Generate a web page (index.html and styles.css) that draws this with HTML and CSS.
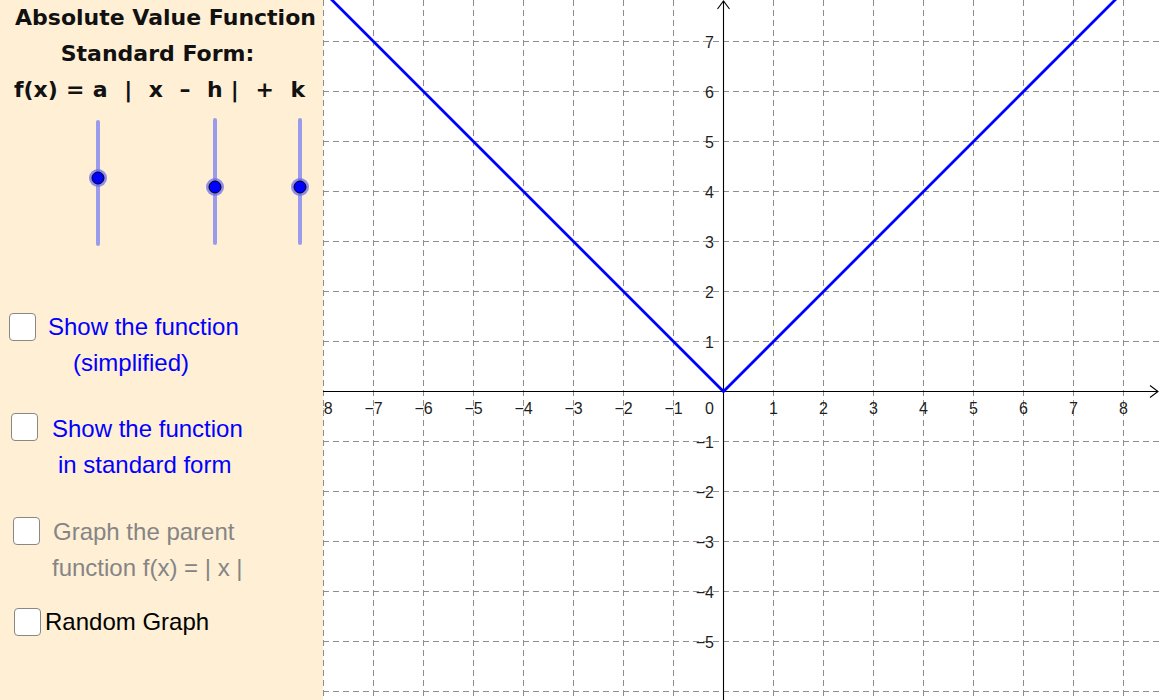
FILE: index.html
```html
<!DOCTYPE html>
<html>
<head>
<meta charset="utf-8">
<link rel="stylesheet" href="styles.css">
</head>
<body>
<div class="app">
  <div class="panel">
    <div class="title">
      <div class="t1">Absolute Value Function</div>
      <div class="t2">Standard Form:</div>
      <div class="t3">f(x) = a  |  x  –  h |  +  k</div>
    </div>
    <svg class="sliders" width="323" height="140" viewBox="0 110 323 140">
      <g stroke="#9b9bee" stroke-width="4" stroke-linecap="round">
        <line x1="98" y1="122" x2="98" y2="244"/>
        <line x1="215" y1="120" x2="215" y2="243"/>
        <line x1="300" y1="120" x2="300" y2="243"/>
      </g>
      <g>
        <circle cx="98" cy="178" r="9" fill="#6c6cf0" opacity="0.75"/>
        <circle cx="98" cy="178" r="6" fill="#0000ff" stroke="#000" stroke-width="1"/>
        <circle cx="215" cy="187" r="9" fill="#6c6cf0" opacity="0.75"/>
        <circle cx="215" cy="187" r="6" fill="#0000ff" stroke="#000" stroke-width="1"/>
        <circle cx="300" cy="187" r="9" fill="#6c6cf0" opacity="0.75"/>
        <circle cx="300" cy="187" r="6" fill="#0000ff" stroke="#000" stroke-width="1"/>
      </g>
    </svg>
    <div class="check c1">
      <span class="box"></span>
      <div class="label blue">
        <div>Show the function</div>
        <div class="l2">(simplified)</div>
      </div>
    </div>
    <div class="check c2">
      <span class="box"></span>
      <div class="label blue">
        <div>Show the function</div>
        <div class="l2">in standard form</div>
      </div>
    </div>
    <div class="check c3">
      <span class="box"></span>
      <div class="label gray">
        <div>Graph the parent</div>
        <div class="l2">function f(x) = | x |</div>
      </div>
    </div>
    <div class="check c4">
      <span class="box"></span>
      <div class="label black">
        <div>Random Graph</div>
      </div>
    </div>
  </div>
  <div class="graph">
    <svg id="plot" width="837" height="700" viewBox="0 0 837 700"></svg>
  </div>
</div>
<script src="script.js"></script>
</body>
</html>
```

FILE: script.js
```js
(function () {
  var svg = document.getElementById('plot');
  var NS = 'http://www.w3.org/2000/svg';
  var ox = 400, oy = 391, u = 50;
  function el(name, attrs, text) {
    var e = document.createElementNS(NS, name);
    for (var k in attrs) e.setAttribute(k, attrs[k]);
    if (text !== undefined) e.textContent = text;
    svg.appendChild(e);
    return e;
  }
  var grid = { stroke: '#8e8e8e', 'stroke-width': 1, 'stroke-dasharray': '6 4' };
  for (var i = -8; i <= 8; i++) {
    var x = ox + u * i + 0.5;
    if (i === 0) continue;
    el('line', Object.assign({ x1: x, y1: 0, x2: x, y2: 700 }, grid));
  }
  for (var j = -6; j <= 7; j++) {
    if (j === 0) continue;
    var y = oy - u * j + 0.5;
    el('line', Object.assign({ x1: 0, y1: y, x2: 837, y2: y }, grid));
  }
  el('line', { x1: 0, y1: oy + 0.5, x2: 835, y2: oy + 0.5, stroke: '#000', 'stroke-width': 1.1 });
  el('polyline', { points: '827,385.5 835,391.5 827,397.5', fill: 'none', stroke: '#000', 'stroke-width': 1.1 });
  el('line', { x1: ox + 0.5, y1: 1, x2: ox + 0.5, y2: 700, stroke: '#000', 'stroke-width': 1.1 });
  el('polyline', { points: '394.5,9 400.5,1 406.5,9', fill: 'none', stroke: '#000', 'stroke-width': 1.1 });
  var lab = { 'font-family': 'Liberation Sans, Arial, sans-serif', 'font-size': 16, fill: '#1e1e1e' };
  for (var a = -8; a <= 8; a++) {
    if (a === 0) continue;
    el('text', Object.assign({ x: ox + u * a + 0.5, y: 414, 'text-anchor': 'middle' }, lab), (a < 0 ? '\u2212' + (-a) : '' + a));
  }
  el('text', Object.assign({ x: 391, y: 414, 'text-anchor': 'end' }, lab), '0');
  for (var b = -5; b <= 7; b++) {
    if (b === 0) continue;
    el('text', Object.assign({ x: 391, y: oy - u * b + 6.5, 'text-anchor': 'end' }, lab), (b < 0 ? '\u2212' + (-b) : '' + b));
  }
  var r = 8.5 * u;
  el('polyline', { points: (ox + 0.5 - r) + ',' + (oy + 0.5 - r) + ' ' + (ox + 0.5) + ',' + (oy + 0.5) + ' ' + (ox + 0.5 + r) + ',' + (oy + 0.5 - r), fill: 'none', stroke: '#0000ff', 'stroke-width': 2.8, 'stroke-linejoin': 'miter' });
})();
```

FILE: styles.css
```css
html, body {
  margin: 0;
  padding: 0;
  background: #ffffff;
}
.app {
  width: 1160px;
  height: 700px;
  display: flex;
  overflow: hidden;
  position: relative;
}
.panel {
  width: 323px;
  flex: 0 0 323px;
  height: 700px;
  background: #ffefd5;
  display: flex;
  flex-direction: column;
  position: relative;
  z-index: 1;
}
.graph {
  flex: 1;
  height: 700px;
  overflow: hidden;
}
.graph svg {
  display: block;
}
.title {
  font-family: "DejaVu Sans", sans-serif;
  font-weight: bold;
  font-size: 22px;
  color: #111;
  line-height: 36px;
  text-align: center;
  height: 110px;
}
.t1 { padding-left: 8px; }
.t2 { padding-right: 8px; }
.t3 { white-space: pre; word-spacing: 0.6px; padding-right: 4px; }
.sliders {
  display: block;
}
.check {
  display: flex;
  align-items: flex-start;
  font-family: "Liberation Sans", Arial, sans-serif;
  font-size: 24px;
  line-height: 36px;
}
.box {
  box-sizing: border-box;
  width: 27px;
  height: 28px;
  background: #fff;
  border: 1.5px solid #8b8782;
  border-radius: 4px;
  flex: 0 0 auto;
}
.c1 { margin-top: 59px; padding-left: 9px; gap: 12px; }
.c1 .box { margin-top: 4px; }
.c1 .l2 { padding-left: 25px; }
.c2 { margin-top: 30px; padding-left: 11px; gap: 14px; }
.c2 .box { margin-top: 2px; }
.c2 .l2 { padding-left: 6px; }
.c3 { margin-top: 31px; padding-left: 13px; gap: 13px; }
.c3 .box { margin-top: 3px; }
.c3 .l2 { margin-left: -1px; }
.c4 { margin-top: 18px; padding-left: 14px; gap: 4px; }
.c4 .box { margin-top: 4px; }
.blue { color: #0000ff; }
.gray { color: #858585; }
.black { color: #000; }
```
